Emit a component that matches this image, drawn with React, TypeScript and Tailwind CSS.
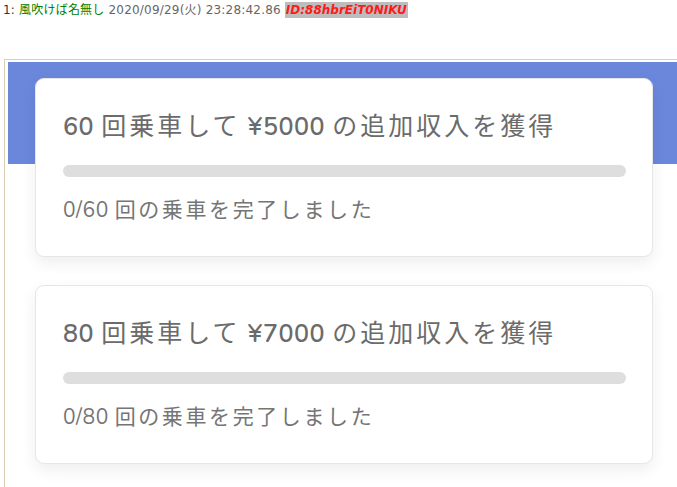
import React from "react";

const jp = '"Nunito", "Lato", "Noto Sans CJK JP", sans-serif';

function Card({ n, yen }: { n: number; yen: number }) {
  return (
    <div
      className="rounded-[9px] border border-[#e6e6e6] bg-white pl-[27px] pr-[26px] pt-[32px] pb-[32px] shadow-[0_6px_16px_rgba(0,0,0,0.07)]"
      style={{ fontFamily: jp }}
    >
      <div className="text-[25px] leading-[32px] text-[#6b6b6b] whitespace-nowrap">
        <span className="font-semibold tracking-[0.5px]">{n} </span>
        <span className="tracking-[3px]">回乗車して</span>
        <span className="font-semibold tracking-[0.5px]"> ¥{yen} </span>
        <span className="tracking-[3px]">の追加収入を獲得</span>
      </div>
      <div className="mt-[22px] h-[12px] rounded-full bg-[#dedede]" />
      <div className="mt-[19px] text-[21px] leading-[28px] text-[#757575] whitespace-nowrap">
        <span className="tracking-[0.5px]">0/{n} </span>
        <span className="tracking-[2.6px]">回の乗車を完了しました</span>
      </div>
    </div>
  );
}

export default function App() {
  return (
    <div className="w-[677px] h-[487px] overflow-hidden bg-white">
      <div
        className="pl-[3px] pt-[2px] h-[18px] text-[12px] leading-[16px] whitespace-nowrap tracking-[0.2px]"
        style={{ fontFamily: '"DejaVu Sans", "Noto Sans CJK JP", sans-serif' }}
      >
        <span className="text-[#333]">1: </span>
        <span className="text-[#008000]">風吹けば名無し</span>
        <span className="text-[#666]"> 2020/09/29(火) 23:28:42.86 </span>
        <span className="inline-block align-top bg-[#bdbdbd] text-[#ff1a1a] font-bold italic px-[1px] h-[16px] tracking-normal">ID:88hbrEiT0NIKU</span>
      </div>
      <div className="ml-[4px] mt-[41px] border-l border-t border-l-[#d8cfb0] border-t-[#d0d0d0] pl-[3px] pt-[2px] h-[430px]">
        <div className="relative">
          <div className="absolute left-0 right-0 top-0 h-[102px] bg-[#6b87dc]" />
          <div className="relative pl-[27px] pr-[24px] pt-[16px] flex flex-col gap-[28px]">
            <Card n={60} yen={5000} />
            <Card n={80} yen={7000} />
          </div>
        </div>
      </div>
    </div>
  );
}
